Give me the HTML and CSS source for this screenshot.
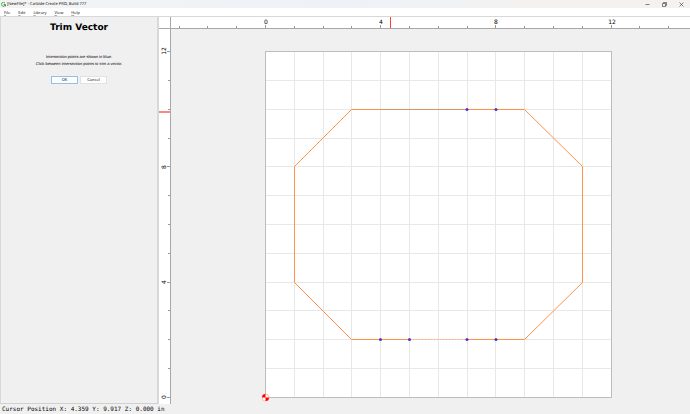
FILE: index.html
```html
<!DOCTYPE html>
<html lang="en">
<head>
<meta charset="utf-8">
<title>[NewFile]* - Carbide Create PRO, Build 777</title>
<link rel="stylesheet" href="styles.css">
</head>
<body>
<header class="titlebar">
  <svg class="logo" viewBox="0 0 10 10" aria-hidden="true"><path d="M8 2.2A4 4 0 1 0 8.6 6H5.5" fill="none" stroke="#3db23d" stroke-width="2"/><path d="M5.5 5H9V9" fill="none" stroke="#333" stroke-width="1"/></svg>
  <span class="caption">[NewFile]* - Carbide Create PRO, Build 777</span>
  <div class="window-buttons">
    <button aria-label="Minimize"><svg viewBox="0 0 5 5"><path d="M0.5 2.5H4.5"/></svg></button>
    <button aria-label="Restore"><svg viewBox="0 0 5 5"><path d="M.5 1.5h3v3h-3zM1.5 1.2V.5h3v3h-.8"/></svg></button>
    <button aria-label="Close"><svg viewBox="0 0 5 5"><path d="M.5 .5l4 4M4.5 .5l-4 4"/></svg></button>
  </div>
</header>
<nav class="menubar">
  <button><u>F</u>ile</button>
  <button><u>E</u>dit</button>
  <button><u>L</u>ibrary</button>
  <button><u>V</u>iew</button>
  <button><u>H</u>elp</button>
</nav>
<main class="main">
  <section class="panel">
    <h1>Trim Vector</h1>
    <p>Intersection points are shown in blue.<br>Click between intersection points to trim a vector.</p>
    <div class="actions">
      <button class="default">OK</button>
      <button>Cancel</button>
    </div>
  </section>
  <section class="workspace">
    <div class="corner"></div>
    <svg class="ruler top">
      <path class="ticks" d="M8.5 9v2M36.5 9v2M65.5 9v2M94.5 8v3M123.5 9v2M152.5 9v2M180.5 9v2M209.5 8v3M238.5 9v2M267.5 9v2M296.5 9v2M324.5 8v3M353.5 9v2M382.5 9v2M411.5 9v2M440.5 8v3M468.5 9v2M497.5 9v2"/>
      <text x="95" y="7">0</text>
      <text x="210" y="7">4</text>
      <text x="325" y="7">8</text>
      <text x="441" y="7">12</text>
      <path class="cursor" d="M219.5 0v12"/>
    </svg>
    <svg class="ruler left">
      <path class="ticks" d="M8 22.5h3M9 51.5h2M9 80.5h2M9 109.5h2M8 137.5h3M9 166.5h2M9 195.5h2M9 224.5h2M8 253.5h3M9 281.5h2M9 310.5h2M9 339.5h2M8 368.5h3"/>
      <text transform="translate(7 22) rotate(-90)">12</text>
      <text transform="translate(7 138) rotate(-90)">8</text>
      <text transform="translate(7 253) rotate(-90)">4</text>
      <text transform="translate(7 368) rotate(-90)">0</text>
      <path class="cursor" d="M0 83h12"/>
    </svg>
    <svg class="canvas">
      <rect class="stock" x="94.5" y="22.5" width="346" height="346"/>
      <path class="grid" d="M123.5 23v345M152.5 23v345M180.5 23v345M209.5 23v345M238.5 23v345M267.5 23v345M296.5 23v345M324.5 23v345M353.5 23v345M382.5 23v345M411.5 23v345M95 51.5h345M95 80.5h345M95 109.5h345M95 137.5h345M95 166.5h345M95 195.5h345M95 224.5h345M95 253.5h345M95 281.5h345M95 310.5h345M95 339.5h345"/>
      <path class="vector" d="M238.5 310.5H180.5L123.5 253.5V137.5L180.5 80.5H353.5L411.5 137.5V253.5L353.5 310.5H296.5"/>
      <path class="shade" d="M209.5 80.5H296.5"/>
      <path class="vector hover" d="M238.5 310.5H296.5"/>
      <g class="points">
        <circle cx="296" cy="80.5" r="1.5"/>
        <circle cx="325" cy="80.5" r="1.5"/>
        <circle cx="209.5" cy="310.5" r="1.5"/>
        <circle cx="238.5" cy="310.5" r="1.5"/>
        <circle cx="296" cy="310.5" r="1.5"/>
        <circle cx="325" cy="310.5" r="1.5"/>
      </g>
      <g transform="translate(94.5 368.5)">
        <circle r="3.5" fill="#fff" stroke="#f77" stroke-width=".5"/>
        <path d="M0 0V-3.5A3.5 3.5 0 0 0 -3.5 0ZM0 0V3.5A3.5 3.5 0 0 0 3.5 0Z" fill="#f00"/>
      </g>
    </svg>
  </section>
</main>
<footer class="status">Cursor Position X: 4.359 Y: 9.917 Z: 0.000 in</footer>
</body>
</html>
```
FILE: styles.css
```css
* { box-sizing: border-box; }

body {
  display: flex;
  flex-direction: column;
  height: 100vh;
  margin: 0;
  overflow: hidden;
  background: #f0f0f0;
  color: #000;
  font-family: "Open Sans", "Noto Sans", sans-serif;
  font-size: 4px;
  text-rendering: geometricPrecision;
}

button {
  margin: 0;
  padding: 0;
  border: 0;
  background: none;
  color: inherit;
  font: inherit;
}

.titlebar {
  display: flex;
  align-items: center;
  flex: none;
  height: 8px;
  padding-left: 1px;
  background: linear-gradient(90deg, #f3f3f3, #eef2f8 50%, #f3f2f1 75%);
}

.logo {
  width: 5px;
  height: 5px;
  margin-right: 1px;
}

.caption {
  padding-top: 2px;
  line-height: 8px;
}

.window-buttons {
  display: flex;
  margin-left: auto;
  padding-right: 6px;
  gap: 12px;
}

.window-buttons button {
  display: flex;
  width: 5px;
}

.window-buttons svg {
  width: 5px;
  height: 5px;
  fill: none;
  stroke: #333;
  stroke-width: .6;
}

.menubar {
  display: flex;
  align-items: center;
  flex: none;
  height: 9px;
  padding: 2px 0 0 4px;
  gap: 8px;
  border-bottom: 1px solid #d8d8d8;
  background: #fff;
  line-height: 8px;
}

.menubar u {
  text-decoration-thickness: 1px;
  text-decoration-color: #aaa;
}

.main {
  display: grid;
  grid-template-columns: 159px 1fr;
  flex: 1;
  min-height: 0;
}

.panel {
  border-right: 2px solid #d8d8d8;
  border-left: 1px solid #d8d8d8;
  border-bottom: 1px solid #d0d0d0;
  text-align: center;
}

.panel h1 {
  margin: 4px 0 18px;
  font-family: "DejaVu Sans", sans-serif;
  font-size: 9px;
  font-weight: 700;
  line-height: 14px;
}

.panel p {
  margin: 0;
  font-family: "Liberation Sans", sans-serif;
  line-height: 7px;
}

.actions {
  display: flex;
  justify-content: center;
  margin-top: 9px;
  gap: 2px;
}

.actions button {
  width: 27px;
  height: 8px;
  border: 1px solid #e2e2e2;
  background: #fdfdfd;
  line-height: 6px;
}

.actions .default { border-color: #8fc1ea; }

.workspace {
  display: grid;
  grid-template-columns: 12px 1fr;
  grid-template-rows: 12px 1fr;
  min-width: 0;
  min-height: 0;
}

.workspace svg {
  display: block;
  width: 100%;
  height: 100%;
  min-width: 0;
  min-height: 0;
}

.corner, .ruler { background: #fff; }

.corner, .top { border-bottom: 1px solid #a8a8a8; }

.corner, .left { border-right: 1px solid #a8a8a8; }

.ruler text {
  font-family: "DejaVu Sans", sans-serif;
  font-size: 6px;
  text-anchor: middle;
}

.ticks { stroke: #999; }

.cursor { stroke: #ff3b3b; }

.left .cursor {
  stroke: #ff8585;
  stroke-width: 2;
}

.stock {
  fill: #fff;
  stroke: #bdbdbd;
}

.grid { stroke: #e8e8e8; }

.vector {
  fill: none;
  stroke: #ff9248;
}

.shade { stroke: #d89560; }

.hover {
  stroke: #ffae7c;
  stroke-dasharray: 2 1;
}

.points { fill: #4936c9; }

.status {
  flex: none;
  height: 10px;
  padding-left: 2px;
  font-family: "DejaVu Sans Mono", monospace;
  font-size: 6px;
  line-height: 11px;
}
```
